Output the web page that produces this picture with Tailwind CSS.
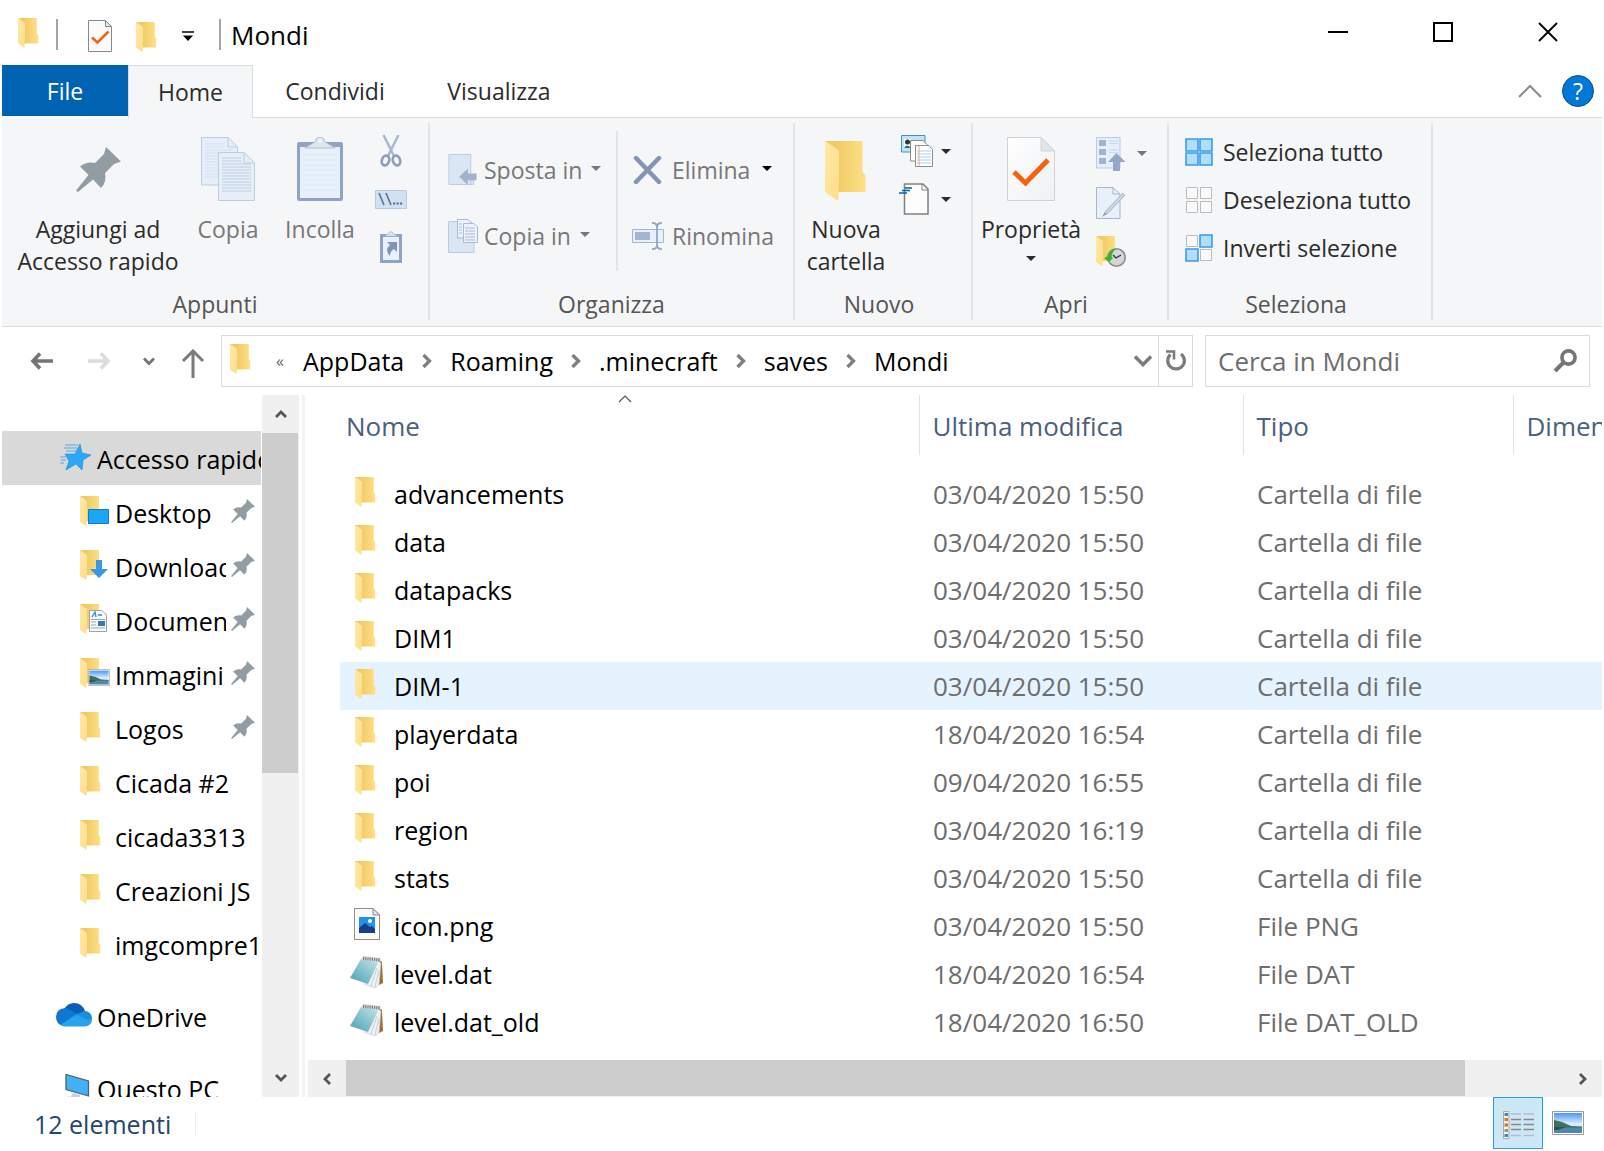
<!DOCTYPE html>
<html lang="it">
<head>
<meta charset="utf-8">
<title>Mondi</title>
<script src="https://cdn.jsdelivr.net/npm/@tailwindcss/browser@4"></script>
</head>
<body class="bg-white font-['Open_Sans',sans-serif] text-black">

<svg class="absolute size-0" aria-hidden="true">
  <defs>
    <linearGradient id="gBack" x1="0" x2="1"><stop offset="0.3" stop-color="#efcb66"/><stop offset="1" stop-color="#ffe086"/></linearGradient>
    <linearGradient id="gFlap" x1="0" x2="1" y2="1"><stop offset="0" stop-color="#ffe9ab"/><stop offset="1" stop-color="#fddd86"/></linearGradient>
    <linearGradient id="gCover" x1="1" x2="0" y1="0" y2="1"><stop offset="0" stop-color="#c9e6ea"/><stop offset="0.5" stop-color="#83c3cf"/><stop offset="1" stop-color="#4f9fb3"/></linearGradient>
    <linearGradient id="gSky" x2="0" y2="1"><stop offset="0" stop-color="#4d97f5"/><stop offset="0.55" stop-color="#dceefb"/><stop offset="1" stop-color="#9fc8e8"/></linearGradient>
    <linearGradient id="gDoc" x2="1" y2="1"><stop offset="0" stop-color="#ffffff"/><stop offset="1" stop-color="#eef0f3"/></linearGradient>
  </defs>
  <symbol id="folder" viewBox="0 0 42 60">
    <path d="M0 0H37.500V31L40.500 34V51H8z" fill="url(#gBack)"/>
    <path d="M0 0L12 8Q14 9 14 11V46L13 60L0 51z" fill="url(#gFlap)"/>
  </symbol>
  <symbol id="pin" viewBox="0 0 45 45">
    <path d="M30 0L45 14.500L38 17L29 26Q31 35 25 41L17 32.500L2 45L0 43.500L12.500 28L4 19.500Q11 14 19 16L28 7z" fill="#929da3"/>
  </symbol>
  <symbol id="picture" viewBox="0 0 32 24">
    <path d="M.5.5H31.500V23.500H.5z" fill="#fff" stroke="#9b9b9b"/>
    <path d="M2 2H30V22H2z" fill="url(#gSky)"/>
    <path d="M2 9L10 11L19 15L30 15.500V17H2z" fill="#3f6f5a"/>
    <path d="M2 16.500H30V22H2z" fill="#4f87b0"/>
    <path d="M2 16H14L6 19H2z" fill="#2c5456"/>
  </symbol>
  <symbol id="notepad" viewBox="0 0 33 32">
    <path d="M29 4L32 6L33 27L29 29z" fill="#9c7038"/>
    <path d="M28 5L31 7L29 29L25 32L14 28z" fill="#eef1f5" stroke="#bcc4cc" stroke-width=".6"/>
    <path d="M27 12L21 30M29 14L25 31" stroke="#b5bec8" stroke-width=".7"/>
    <path d="M11 3L29 5L18 28L0 22z" fill="url(#gCover)"/>
    <path d="M13 0L31 2L29 6L11 4z" fill="#d5d9dc"/>
    <path d="M13 2.500L30 4" stroke="#777f85" stroke-width="3" stroke-dasharray="1.200 1"/>
  </symbol>
  <symbol id="caret" viewBox="0 0 10 5"><path d="M0 0H10L5 5z" fill="currentColor"/></symbol>
  <symbol id="crumb" viewBox="0 0 12 14"><path d="M2.500 1L8.500 7L2.500 13" fill="none" stroke="#7f7f7f" stroke-width="3.400"/></symbol>
</svg>

<div class="flex h-screen flex-col overflow-hidden px-0.5">

  <!-- Title bar -->
  <header class="flex h-[65px] shrink-0 items-start">
    <div class="flex h-[69px] items-center pl-4">
      <svg class="mb-1 h-[30px] w-[21px]"><use href="#folder"/></svg>
      <span class="ml-[17px] h-[31px] w-0.5 bg-[#a5a5a5]"></span>
      <button aria-label="Proprietà" class="ml-[30px]"><svg class="mt-0.5 h-8 w-6" viewBox="0 0 24 32"><path d="M.5.500H17.500L23.500 6.500V31.500H.500z" fill="#fbfbfb" stroke="#868a8c"/><path d="M17.500.500V6.500H23.500z" fill="#e3e5e7" stroke="#868a8c"/><path d="M4 17.500L9.500 22.500L20.500 11.500" fill="none" stroke="#f7630c" stroke-width="2.600"/></svg></button>
      <button aria-label="Nuova cartella" class="ml-6"><svg class="mt-1 h-[30px] w-[21px]"><use href="#folder"/></svg></button>
      <button aria-label="Personalizza" class="ml-[25px]"><svg class="mt-1 h-[11px] w-3" viewBox="0 0 12 11"><path d="M0 1H12" stroke="#000" stroke-width="1.500"/><path d="M1 4.500H11L6 10z"/></svg></button>
      <span class="ml-[25px] h-[31px] w-0.5 bg-[#a5a5a5]"></span>
      <h1 class="ml-2.5 text-[26px] leading-8">Mondi</h1>
    </div>
    <div class="ml-auto flex h-16 pr-0.5">
      <button aria-label="Riduci" class="grid w-[105px] place-items-center"><svg class="size-5" viewBox="0 0 20 20"><path d="M0 10H20" stroke="#000" stroke-width="2"/></svg></button>
      <button aria-label="Ingrandisci" class="grid w-[105px] place-items-center"><svg class="size-5" viewBox="0 0 20 20"><path d="M1 1H19V19H1z" fill="none" stroke="#000" stroke-width="2"/></svg></button>
      <button aria-label="Chiudi" class="grid w-[105px] place-items-center"><svg class="size-5" viewBox="0 0 20 20"><path d="M1 1L19 19M19 1L1 19" stroke="#000" stroke-width="1.800"/></svg></button>
    </div>
  </header>

  <!-- Tabs -->
  <nav class="flex h-[53px] shrink-0 text-[23px] leading-8 text-[#2b2b2b]">
    <button class="h-[51px] w-[126px] bg-[#0063b1] text-white">File</button>
    <button class="w-[125px] border-x border-t border-[#dadbdc] bg-[#f5f6f7]">Home</button>
    <div class="flex flex-1 items-center border-b border-[#dadbdc]">
      <button class="w-[164px]">Condividi</button>
      <button class="w-[164px]">Visualizza</button>
      <button aria-label="Riduci barra multifunzione" class="ml-auto"><svg class="h-[14px] w-6" viewBox="0 0 24 14"><path d="M1 13L12 2L23 13" fill="none" stroke="#8c8c8c" stroke-width="2"/></svg></button>
      <button aria-label="Guida" class="mr-2 ml-5 size-8 rounded-full border border-[#0a4f8f] bg-[#0078d7] text-[23px] leading-7 text-white">?</button>
    </div>
  </nav>

  <!-- Ribbon -->
  <section class="flex h-[209px] shrink-0 border-b border-[#dadbdc] bg-[#f5f6f7] pt-[5px] pb-[6px] text-[23px] leading-8 text-[#2b2b2b]">
    <div class="flex w-[428px] flex-col border-r-2 border-[#e2e3e4]">
      <div class="flex h-[166px] text-[#777]">
        <button class="flex w-48 flex-col items-center pt-[14px] whitespace-nowrap text-[#2b2b2b]"><span class="grid h-16 place-items-center"><svg class="size-[45px]"><use href="#pin"/></svg></span><span class="mt-3">Aggiungi ad<br>Accesso rapido</span></button>
        <button class="flex w-[68px] flex-col items-center pt-[14px]">
          <svg class="h-16 w-[54px]" viewBox="0 0 54 64"><g fill="#e6eef8" stroke="#bccde2"><path d="M.5.5H27L36.500 10V48H.5z"/><path d="M27 .5V10H36.500z"/><path d="M4 7H24M4 10H24M4 13H32M4 16H32M4 19H32M4 22H32M4 25H32M4 28H32M4 31H32M4 34H32M4 37H32M4 40H32" stroke="#d5e1f0"/><path d="M17.500 15.500H43L53.500 26V63.500H17.500z"/><path d="M43 15.500V26H53.500z"/><path d="M21 21H40M21 24H40M21 27H50M21 30H50M21 33H50M21 36H50M21 39H50M21 42H50M21 45H50M21 48H50M21 51H50M21 54H50"/></g></svg>
          <span class="mt-3">Copia</span></button>
        <button class="ml-2.5 flex w-24 flex-col items-center pt-[14px]">
          <svg class="h-16 w-[46px]" viewBox="0 0 46 64"><rect y="5" width="46" height="59" rx="2" fill="#8fa3c3"/><path d="M3 10H43V61H3z" fill="#e8f0fb"/><path d="M8 11L18 5Q19 0 23 0T28 5L38 11z" fill="#dfe6f0" stroke="#b3c0d3"/><circle cx="23" cy="4" r="1.800" fill="#f5f6f7"/><path d="M6 18H40M6 23H40M6 28H40M6 33H40M6 38H40M6 43H40M6 48H40M6 53H40" stroke="#dce7f5"/></svg>
          <span class="mt-3">Incolla</span></button>
        <div class="grid w-[46px] auto-rows-[48px] place-items-center pt-1">
          <button aria-label="Taglia"><svg class="h-8 w-[22px]" viewBox="0 0 22 32"><path d="M3.500 0L14 21M18.500 0L8 21" stroke="#a9b7cf" stroke-width="2.500"/><g fill="none" stroke="#8b9cbd" stroke-width="2.600"><ellipse cx="5.500" cy="25.500" rx="3.600" ry="5" transform="rotate(18 5.500 25.500)"/><ellipse cx="16.500" cy="25.500" rx="3.600" ry="5" transform="rotate(-18 16.500 25.500)"/></g></svg></button>
          <button aria-label="Copia percorso"><svg class="h-[19px] w-8" viewBox="0 0 32 19"><path d="M.5.5H31.500V18.500H.5z" fill="#d3e0f0" stroke="#b7c7dc"/><path d="M4 3L9 15M11 3L16 15" stroke="#56719a" stroke-width="1.600"/><path d="M18 13.500H27.500" stroke="#56719a" stroke-width="2.200" stroke-dasharray="2.200 1.300"/></svg></button>
          <button aria-label="Incolla collegamento"><svg class="h-8 w-[22px]" viewBox="0 0 22 32"><path d="M1.500 4.500H20.500V30.500H1.500z" fill="#e8f0fb" stroke="#8fa3c3" stroke-width="3"/><path d="M5 5L9 2Q11-1 13 2L17 5z" fill="#dfe6f0" stroke="#b3c0d3"/><path d="M7 11H17V21L14 18Q10 20 10 25Q4 19 10 14z" fill="#7f93b5"/></svg></button>
        </div>
      </div>
      <h2 class="text-center text-[#555]">Appunti</h2>
    </div>

    <div class="flex w-[365px] flex-col border-r-2 border-[#e2e3e4]">
      <div class="flex h-[166px] text-[#777]">
        <div class="mt-2 mb-[17px] grid w-[188px] auto-rows-[66px] content-start items-center border-r-2 border-[#e2e3e4] pt-1.5 pl-[18px]">
          <button class="flex items-center gap-[6px]"><svg class="h-8 w-[30px]" viewBox="0 0 30 33"><path d="M.5.5H23V31.500H.5z" fill="#dbe6f4" stroke="#b9cbe0"/><path d="M23 22V31.500H26V22z" fill="#dbe6f4" stroke="#b9cbe0"/><path d="M11 23.500L20 15V20H29V27H20V32z" fill="#a0b2cd"/></svg><span>Sposta in</span><svg class="mb-1 ml-[3px] h-[5px] w-2.5"><use href="#caret"/></svg></button>
          <button class="flex items-center gap-[6px]"><svg class="h-[34px] w-[30px]" viewBox="0 0 30 34"><path d="M.5 2.500H23V20L26 23V33.500H.5z" fill="#dbe6f4" stroke="#b9cbe0"/><g fill="#edf3fa" stroke="#a9bad2"><path d="M9.500.5H20L24 4.500V19H9.500z"/><path d="M15.500 4.500H26L29.500 8V23.500H15.500z"/><path d="M11 5H14M11 8H14M11 11H14M11 14H14M17 9H27M17 12H27M17 15H27M17 18H27M17 21H27"/></g></svg><span>Copia in</span><svg class="mb-1 ml-[3px] h-[5px] w-2.5"><use href="#caret"/></svg></button>
        </div>
        <div class="mt-2 mb-[17px] grid flex-1 auto-rows-[66px] content-start items-center pt-1.5 pl-[14px]">
          <button class="flex items-center gap-2"><svg class="h-7 w-8" viewBox="0 0 32 28"><path d="M4 2L27 26M27 2L4 26" stroke="#8494b5" stroke-width="4.500" stroke-linecap="round"/></svg><span>Elimina</span><svg class="mb-1 ml-1 h-[5px] w-2.5 text-black"><use href="#caret"/></svg></button>
          <button class="flex items-center gap-2"><svg class="h-7 w-8" viewBox="0 0 32 28"><path d="M.5 7.500H31.500V20.500H.5z" fill="#e8f0fa" stroke="#a3b5cf"/><path d="M3 10H18V18H3z" fill="#a3b5cf"/><path d="M20 .8Q25 1 25 5Q25 1 30 .8M25 4V24M20 27.200Q25 27 25 23Q25 27 30 27.200" fill="none" stroke="#93a6c4" stroke-width="1.800"/></svg><span>Rinomina</span></button>
        </div>
      </div>
      <h2 class="text-center text-[#555]">Organizza</h2>
    </div>

    <div class="flex w-[178px] flex-col border-r-2 border-[#e2e3e4]">
      <div class="flex h-[166px]">
        <button class="flex w-[102px] flex-col items-center pt-[14px]"><span class="grid h-16 place-items-end"><svg class="h-[60px] w-[42px]"><use href="#folder"/></svg></span><span class="mt-3">Nuova<br>cartella</span></button>
        <div class="grid flex-1 auto-rows-[48px] content-start items-center pt-1 pl-0.5">
          <button aria-label="Nuovo elemento" class="flex items-center gap-2"><svg class="h-8 w-[34px]" viewBox="0 0 34 32"><path d="M2.500.5H26V17H2.500z" fill="#bfe3f7" stroke="#4b8fb3"/><path d="M5 4H12V13H5z" fill="#fff"/><circle cx="8.500" cy="7" r="2.500" fill="#333"/><path d="M5 13Q8 8 12 13z" fill="#2d6a7a"/><g fill="#fff" stroke="#8d8d8d"><path d="M11.500 5.500H24L28 9.500V26H11.500z"/><path d="M16.500 10.500H30L33.500 14.500V31.500H16.500z"/></g><path d="M18 16H32M18 19H32M18 22H32M18 25H32M18 28H32" stroke="#a5d0ef"/><path d="M20 11V31" stroke="#f4a58a"/></svg><svg class="h-[5px] w-2.5"><use href="#caret"/></svg></button>
          <button aria-label="Accesso facilitato" class="flex items-center gap-2"><svg class="h-8 w-[34px]" viewBox="0 0 34 32"><path d="M5.500 1H24L29 6V31H5.500z" fill="#fdfdfd" stroke="#808080" stroke-width="1.500"/><path d="M23 1V7H29" fill="none" stroke="#808080"/><path d="M6 5H13M3 7.500H11M0 10H8" stroke="#0063b1" stroke-width="1.500"/></svg><svg class="h-[5px] w-2.5"><use href="#caret"/></svg></button>
        </div>
      </div>
      <h2 class="pr-2 text-center text-[#555]">Nuovo</h2>
    </div>

    <div class="flex w-[196px] flex-col border-r-2 border-[#e2e3e4]">
      <div class="flex h-[166px]">
        <button class="flex w-[116px] flex-col items-center pt-[14px]"><svg class="h-16 w-12" viewBox="0 0 48 64"><path d="M.5.5H34L47.500 14V63.500H.5z" fill="url(#gDoc)" stroke="#cfd2d5"/><path d="M34 .5V14H47.500z" fill="#e3e5e7" stroke="#cfd2d5"/><path d="M7 35L18.500 46L41 23" fill="none" stroke="#f7630c" stroke-width="5"/></svg><span class="mt-3">Proprietà</span><svg class="mt-[11px] h-[5px] w-2.5"><use href="#caret"/></svg></button>
        <div class="grid flex-1 auto-rows-[49px] content-start items-center pt-[6px] pl-[7px]">
          <button aria-label="Apri" class="flex items-center gap-[11px] text-[#777]"><svg class="h-[34px] w-[30px]" viewBox="0 0 30 34"><path d="M.5.5H24V31H.5z" fill="#e6eef9" stroke="#bccbe0"/><path d="M3 3H10V9H3zM3 12H10V18H3zM3 21H10V27H3z" fill="#a3b3cc"/><path d="M13 4H22M13 6.500H22M13 13H22M13 15.500H22" stroke="#cbd8e8"/><path d="M20.500 16L29.500 25H24V34H17V25H12z" fill="#94a7c6"/></svg><svg class="h-[5px] w-2.5"><use href="#caret"/></svg></button>
          <button aria-label="Modifica"><svg class="h-8 w-[30px]" viewBox="0 0 30 32"><path d="M.5.5H17L24 7V31.500H.5z" fill="#e8f0fa" stroke="#a6b6cd"/><path d="M17 .5V7H24" fill="none" stroke="#a6b6cd"/><path d="M28 7L10 26" stroke="#a9b7ca" stroke-width="3.500"/><path d="M27.500 7.500L10 26" stroke="#d6e0ec" stroke-width="1.500"/><path d="M6 30L9 25L11 27z" fill="#8b9bb2"/></svg></button>
          <button aria-label="Cronologia"><svg class="h-[31px] w-[30px]" viewBox="0 0 30 31"><path d="M0 0H19V16H20V25H5z" fill="url(#gBack)"/><path d="M0 0L7 5V25L6 30L0 26z" fill="url(#gFlap)"/><circle cx="20.500" cy="21.500" r="8.700" fill="#d5d5d5" stroke="#8a8a8a" stroke-width="1.600"/><path d="M17 19L20 22L25 19" fill="none" stroke="#333" stroke-width="1.300"/><path d="M19 13Q14 13 12.500 20L8 22L13 26L17 22L15.500 20.500Q16 16 20 13z" fill="#35b52c"/></svg></button>
        </div>
      </div>
      <h2 class="pr-2 text-center text-[#555]">Apri</h2>
    </div>

    <div class="flex w-[264px] flex-col border-r-2 border-[#e2e3e4]">
      <div class="grid h-[166px] auto-rows-[48px] content-start items-center pt-[5px] pl-4">
        <button class="flex items-center gap-2.5"><svg class="size-7" viewBox="0 0 28 28"><path d="M1 1H13V13H1zM15 1H27V13H15zM1 15H13V27H1zM15 15H27V27H15z" fill="#b0deff" stroke="#3a9bea" stroke-width="1.600"/></svg>Seleziona tutto</button>
        <button class="flex items-center gap-2.5 whitespace-nowrap"><svg class="size-7" viewBox="0 0 28 28"><path d="M1.500 1.500H12.500V12.500H1.500zM15.500 1.500H26.500V12.500H15.500zM1.500 15.500H12.500V26.500H1.500zM15.500 15.500H26.500V26.500H15.500z" fill="#fafafa" stroke="#bcbcbc"/></svg>Deseleziona tutto</button>
        <button class="flex items-center gap-2.5"><svg class="size-7" viewBox="0 0 28 28"><path d="M1.500 1.500H12.500V12.500H1.500zM15.500 15.500H26.500V26.500H15.500z" fill="#fafafa" stroke="#bcbcbc"/><path d="M15 1H27V13H15zM1 15H13V27H1z" fill="#b0deff" stroke="#3a9bea" stroke-width="1.600"/></svg>Inverti selezione</button>
      </div>
      <h2 class="pr-2 text-center text-[#555]">Seleziona</h2>
    </div>
  </section>

  <!-- Address bar -->
  <div class="flex h-[68px] shrink-0 items-center pr-3 pb-1.5 pt-1.5">
    <div class="flex w-[219px] items-center pl-7">
      <button aria-label="Indietro"><svg class="h-[18px] w-6" viewBox="0 0 24 18"><path d="M10 1.500L3 9L10 16.500M3 9H23" fill="none" stroke="#757575" stroke-width="3.600"/></svg></button>
      <button aria-label="Avanti" class="ml-[33px]"><svg class="h-[18px] w-6" viewBox="0 0 24 18"><path d="M14 1.500L21 9L14 16.500M21 9H1" fill="none" stroke="#dcdcdc" stroke-width="3.600"/></svg></button>
      <button aria-label="Posizioni recenti" class="ml-8"><svg class="h-[9px] w-3" viewBox="0 0 12 9"><path d="M1 1.500L6 6.500L11 1.500" fill="none" stroke="#757575" stroke-width="2.800"/></svg></button>
      <button aria-label="Su" class="ml-[26px]"><svg class="mt-1 h-[29px] w-6" viewBox="0 0 24 29"><path d="M2 12L12 2L22 12M12 2V29" fill="none" stroke="#7b7b7b" stroke-width="3"/></svg></button>
    </div>
    <nav class="flex h-[52px] flex-1 items-center border border-[#d9d9d9] pl-2 text-[25px] leading-8">
      <svg class="mb-1 h-[30px] w-[21px]"><use href="#folder"/></svg>
      <span class="ml-[25px] w-[27px] text-[16px] leading-6 text-[#666]">«</span>
      <div class="flex items-center gap-[17px]">
        <a href="#">AppData</a><svg class="h-[14px] w-3"><use href="#crumb"/></svg>
        <a href="#">Roaming</a><svg class="h-[14px] w-3"><use href="#crumb"/></svg>
        <a href="#">.minecraft</a><svg class="h-[14px] w-3"><use href="#crumb"/></svg>
        <a href="#">saves</a><svg class="h-[14px] w-3"><use href="#crumb"/></svg>
        <a href="#">Mondi</a>
      </div>
      <button aria-label="Percorsi precedenti" class="mr-[6px] ml-auto"><svg class="h-3 w-[18px]" viewBox="0 0 18 12"><path d="M1 1.500L9 9.500L17 1.500" fill="none" stroke="#7b7b7b" stroke-width="3.400"/></svg></button>
      <button aria-label="Aggiorna" class="grid h-full w-[34px] place-items-center border-l border-[#d9d9d9]"><svg class="size-[22px]" viewBox="0 0 22 22"><path d="M5.500 4.500A8.300 8.300 0 1 0 16 4" fill="none" stroke="#7b7b7b" stroke-width="3.200"/><path d="M1 1.500H9V9.500" fill="none" stroke="#7b7b7b" stroke-width="2.600"/></svg></button>
    </nav>
    <label class="ml-3 flex h-[52px] w-[385px] items-center border border-[#d9d9d9] px-3">
      <input type="text" aria-label="Cerca" placeholder="Cerca in Mondi" class="min-w-0 flex-1 text-[26px] leading-8 outline-none placeholder:text-[#6d6d6d]">
      <svg class="size-6" viewBox="0 0 24 24"><circle cx="15.500" cy="8.500" r="6.600" fill="none" stroke="#757575" stroke-width="3.600"/><path d="M11 13L2 22" stroke="#757575" stroke-width="4"/></svg>
    </label>
  </div>

  <!-- Panes -->
  <main class="flex min-h-0 flex-1">
    <aside class="flex w-[303px] shrink-0 border-r-[3px] border-[#f3f3f3]">
      <ul class="w-[260px] overflow-hidden pt-9 text-[25px] leading-8 [&_li]:flex [&_li]:h-[54px] [&_li]:items-center [&_li]:pt-0.5 [&_li]:whitespace-nowrap">
        <li class="mr-px overflow-hidden bg-[#d9d9d9] pl-[58px]">
          <svg class="mr-[6px] mb-1 h-[26px] w-[31px] shrink-0" viewBox="0 0 31 26"><path d="M5 1H18M4 4H17M6 7H16M0 13H6M1 16H6M0 19H4" stroke="#55a9e0"/><path d="M20 0L22 9L31 11L23 16L22 26L16 20L6 26L9 17L5 10L15 10z" fill="#2aa8f7" stroke="#1c86d1" stroke-width=".6"/></svg>Accesso rapido</li>
        <li class="pl-[78px]"><svg class="mr-[5px] mb-1 h-[31px] w-[30px] shrink-0" viewBox="0 0 30 31"><path d="M0 0H19V16H20V25H5z" fill="url(#gBack)"/><path d="M0 0L7 5V25L6 30L0 26z" fill="url(#gFlap)"/><path d="M8.500 13.500H28.500V27.500H8.500z" fill="#1ba5fb" stroke="#1579c6"/></svg><span class="w-[111px] overflow-hidden">Desktop</span><svg class="mb-1 ml-[5px] size-6 shrink-0"><use href="#pin"/></svg></li>
        <li class="pl-[78px]"><svg class="mr-[5px] mb-1 h-[31px] w-[30px] shrink-0" viewBox="0 0 30 31"><path d="M0 0H19V16H20V25H5z" fill="url(#gBack)"/><path d="M0 0L7 5V25L6 30L0 26z" fill="url(#gFlap)"/><path d="M16 10H22V19H28L19 28L10 19H16z" fill="#3a97e4"/></svg><span class="w-[111px] overflow-hidden">Download</span><svg class="mb-1 ml-[5px] size-6 shrink-0"><use href="#pin"/></svg></li>
        <li class="pl-[78px]"><svg class="mr-[5px] mb-1 h-[31px] w-[30px] shrink-0" viewBox="0 0 30 31"><path d="M0 0H19V16H20V25H5z" fill="url(#gBack)"/><path d="M0 0L7 5V25L6 30L0 26z" fill="url(#gFlap)"/><path d="M9.500 6.500H22L26.500 11V27.500H9.500z" fill="#f7f9fb" stroke="#9aa4ac"/><path d="M12 13L15 8L16 13M18 11H22" stroke="#2e8bd0" stroke-width="1.300" fill="none"/><path d="M11 15.500H25M11 18H16M11 21H16M11 24H25" stroke="#9aa8b3"/><path d="M18 17H25V22H18z" fill="#3b78a8"/></svg><span class="w-[111px] overflow-hidden">Documenti</span><svg class="mb-1 ml-[5px] size-6 shrink-0"><use href="#pin"/></svg></li>
        <li class="pl-[78px]"><svg class="mr-[5px] mb-1 h-[31px] w-[30px] shrink-0" viewBox="0 0 30 31"><path d="M0 0H19V16H20V25H5z" fill="url(#gBack)"/><path d="M0 0L7 5V25L6 30L0 26z" fill="url(#gFlap)"/><use href="#picture" x="8" y="11" width="22" height="17"/></svg><span class="w-[111px] overflow-hidden">Immagini</span><svg class="mb-1 ml-[5px] size-6 shrink-0"><use href="#pin"/></svg></li>
        <li class="pl-[78px]"><svg class="mr-[14px] mb-1 h-[30px] w-[21px] shrink-0"><use href="#folder"/></svg><span class="w-[111px] overflow-hidden">Logos</span><svg class="mb-1 ml-[5px] size-6 shrink-0"><use href="#pin"/></svg></li>
        <li class="pl-[78px]"><svg class="mr-[14px] mb-1 h-[30px] w-[21px] shrink-0"><use href="#folder"/></svg>Cicada #2</li>
        <li class="pl-[78px]"><svg class="mr-[14px] mb-1 h-[30px] w-[21px] shrink-0"><use href="#folder"/></svg>cicada3313</li>
        <li class="pl-[78px]"><svg class="mr-[14px] mb-1 h-[30px] w-[21px] shrink-0"><use href="#folder"/></svg>Creazioni JS</li>
        <li class="pl-[78px]"><svg class="mr-[14px] mb-1 h-[30px] w-[21px] shrink-0"><use href="#folder"/></svg>imgcompre1</li>
        <li class="mt-[18px] pl-[54px]"><svg class="mr-[5px] mb-1 h-6 w-9 shrink-0" viewBox="0 0 36 24"><path d="M8 6Q12 0 18 0Q26 0 29 8L20 14z" fill="#0a5fb4"/><path d="M7 23Q0 21 0 14Q0 6 9 5Q13 5 16 8L25 13L12 20z" fill="#0f78d4"/><path d="M5 21.500L20 11.500L29 8Q36 9 36 16Q36 23 29 23.500H8Q6 23 5 21.500z" fill="#28a3ea"/><path d="M20 11.500L29 8Q35 9 36 15.500L32 17z" fill="#1490df"/></svg>OneDrive</li>
        <li class="mt-[18px] pl-[58px]"><svg class="mr-[7px] mb-1 h-[27px] w-[30px] shrink-0" viewBox="0 0 30 27"><path d="M6 .5L28.500 7V22L6 15.500z" fill="#44b0f8" stroke="#4d6475" stroke-width="1.300"/><path d="M13 19L20 21V24L25 25L14 26L10 24z" fill="#c9d0d6"/><path d="M0 25L9 22.500L14 25L6 27z" fill="#b4bcc4"/></svg>Questo PC</li>
      </ul>
      <div class="flex w-[37px] flex-col bg-[#f0f0f0]">
        <button aria-label="Su" class="grid h-[38px] place-items-center"><svg class="h-2.5 w-3" viewBox="0 0 12 10"><path d="M1 8L6 3L11 8" fill="none" stroke="#555" stroke-width="2.800"/></svg></button>
        <div class="mr-px h-[340px] bg-[#cdcdcd]"></div>
        <button aria-label="Giù" class="mt-auto grid h-[38px] place-items-center"><svg class="h-2.5 w-3" viewBox="0 0 12 10"><path d="M1 2L6 7L11 2" fill="none" stroke="#555" stroke-width="2.800"/></svg></button>
      </div>
    </aside>

    <section class="relative flex min-w-0 flex-1 flex-col pl-[3px]">
      <svg class="absolute top-0 left-[313px] h-2 w-[14px]" viewBox="0 0 14 8"><path d="M1 7L7 1L13 7" fill="none" stroke="#555" stroke-width="1.200"/></svg>
      <div class="min-h-0 flex-1 overflow-hidden pl-8">
        <table class="w-full table-fixed text-left text-[26px] leading-8 text-[#6d6d6d] [&_td]:p-0 [&_td]:pl-[14px] [&_td]:whitespace-nowrap [&_td:first-child]:pl-[15px] [&_td:first-child]:text-[25px] [&_td:first-child]:text-black [&_td>div]:flex [&_td>div]:h-12 [&_td>div]:items-center [&_th]:h-[60px] [&_th]:overflow-hidden [&_th]:p-0 [&_th]:pt-0.5 [&_th]:pl-[13px] [&_th]:font-normal [&_th]:text-[#4c607a]">
          <colgroup><col><col class="w-[324px]"><col class="w-[270px]"><col class="w-[89px]"></colgroup>
          <thead>
            <tr><th class="pl-[6px]!">Nome</th><th class="border-l border-[#e2e2e2]">Ultima modifica</th><th class="border-l border-[#e2e2e2]">Tipo</th><th class="border-l border-[#e2e2e2] whitespace-nowrap">Dimensione</th></tr>
            <tr aria-hidden="true" class="h-[15px]"></tr>
          </thead>
          <tbody>
            <tr><td><div><svg class="mr-[18px] mb-1 h-[30px] w-[21px]"><use href="#folder"/></svg>advancements</div></td><td>03/04/2020 15:50</td><td>Cartella di file</td><td></td></tr>
            <tr><td><div><svg class="mr-[18px] mb-1 h-[30px] w-[21px]"><use href="#folder"/></svg>data</div></td><td>03/04/2020 15:50</td><td>Cartella di file</td><td></td></tr>
            <tr><td><div><svg class="mr-[18px] mb-1 h-[30px] w-[21px]"><use href="#folder"/></svg>datapacks</div></td><td>03/04/2020 15:50</td><td>Cartella di file</td><td></td></tr>
            <tr><td><div><svg class="mr-[18px] mb-1 h-[30px] w-[21px]"><use href="#folder"/></svg>DIM1</div></td><td>03/04/2020 15:50</td><td>Cartella di file</td><td></td></tr>
            <tr class="bg-[#e5f3ff]"><td><div><svg class="mr-[18px] mb-1 h-[30px] w-[21px]"><use href="#folder"/></svg>DIM-1</div></td><td>03/04/2020 15:50</td><td>Cartella di file</td><td></td></tr>
            <tr><td><div><svg class="mr-[18px] mb-1 h-[30px] w-[21px]"><use href="#folder"/></svg>playerdata</div></td><td>18/04/2020 16:54</td><td>Cartella di file</td><td></td></tr>
            <tr><td><div><svg class="mr-[18px] mb-1 h-[30px] w-[21px]"><use href="#folder"/></svg>poi</div></td><td>09/04/2020 16:55</td><td>Cartella di file</td><td></td></tr>
            <tr><td><div><svg class="mr-[18px] mb-1 h-[30px] w-[21px]"><use href="#folder"/></svg>region</div></td><td>03/04/2020 16:19</td><td>Cartella di file</td><td></td></tr>
            <tr><td><div><svg class="mr-[18px] mb-1 h-[30px] w-[21px]"><use href="#folder"/></svg>stats</div></td><td>03/04/2020 15:50</td><td>Cartella di file</td><td></td></tr>
            <tr><td class="pl-[14px]!"><div><svg class="mr-[14px] mb-1 h-8 w-[26px]" viewBox="0 0 26 32"><path d="M.5.5H19L25.500 7V31.500H.5z" fill="#fbfbfb" stroke="#8d8d8d"/><path d="M19 .5V7H25.500z" fill="#e6e6e6" stroke="#8d8d8d"/><path d="M5 9H21V25H5z" fill="#1e93ec"/><circle cx="16" cy="13" r="2" fill="#fff"/><path d="M5 20L11 15L16 19L18 18L21 21V25H5z" fill="#173f86"/></svg>icon.png</div></td><td>03/04/2020 15:50</td><td>File PNG</td><td></td></tr>
            <tr><td class="pl-[10px]!"><div><svg class="mr-[11px] mb-1 h-8 w-[33px]"><use href="#notepad"/></svg>level.dat</div></td><td>18/04/2020 16:54</td><td>File DAT</td><td></td></tr>
            <tr><td class="pl-[10px]!"><div><svg class="mr-[11px] mb-1 h-8 w-[33px]"><use href="#notepad"/></svg>level.dat_old</div></td><td>18/04/2020 16:50</td><td>File DAT_OLD</td><td></td></tr>
          </tbody>
        </table>
      </div>
      <div class="flex h-[37px] shrink-0 bg-[#f0f0f0]">
        <button aria-label="Sinistra" class="grid w-[38px] place-items-center"><svg class="h-3 w-2.5" viewBox="0 0 10 12"><path d="M8 1L3 6L8 11" fill="none" stroke="#555" stroke-width="2.800"/></svg></button>
        <div class="mb-px flex-1 bg-[#cdcdcd]"></div>
        <button aria-label="Destra" class="grid w-[137px] items-center justify-end pr-[14px]"><svg class="h-3 w-2.5" viewBox="0 0 10 12"><path d="M2 1L7 6L2 11" fill="none" stroke="#555" stroke-width="2.800"/></svg></button>
      </div>
    </section>
  </main>

  <!-- Status bar -->
  <footer class="flex h-[54px] shrink-0 items-start pl-8 text-[25px] leading-[54px] text-[#26466d]">
    <span class="w-[161px]">12 elementi</span>
    <span class="mt-[14px] h-6 w-px bg-[#ececec]"></span>
    <button aria-label="Dettagli" class="ml-auto grid h-[52px] w-[50px] place-items-center border border-[#26a0da] bg-[#cce8f6] pt-1 pl-0.5"><svg class="h-7 w-8" viewBox="0 0 32 28"><path d="M.5.500H6V27.500H.500z" fill="#f4f4f4" stroke="#a9a9a9"/><path d="M1.500 2H5V5H1.500zM1.500 23H5V26H1.500z" fill="#4b7fb5"/><path d="M1.500 7H5V10H1.500zM1.500 12.500H5V15.500H1.500z" fill="#d9731f"/><path d="M1.500 18H5V21H1.500z" fill="#9c9a62"/><path d="M8 3H18M20.500 3H31M8 24.500H18M20.500 24.500H31" stroke="#b3b9d0" stroke-width="1.500"/><path d="M8 8.500H18M20.500 8.500H31M8 13.500H18M20.500 13.500H31M8 18.500H18M20.500 18.500H31" stroke="#8b8588" stroke-width="1.300"/></svg></button>
    <button aria-label="Icone grandi" class="mr-[18px] ml-[9px] grid h-[52px] place-items-center"><svg class="h-6 w-8"><use href="#picture"/></svg></button>
  </footer>
</div>
</body>
</html>
